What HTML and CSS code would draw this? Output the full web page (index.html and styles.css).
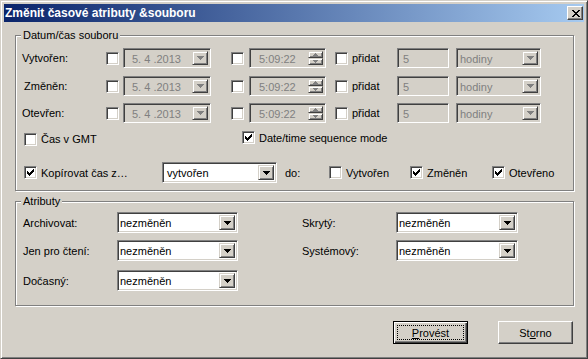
FILE: index.html
```html
<!DOCTYPE html>
<html>
<head>
<meta charset="utf-8">
<link rel="stylesheet" href="styles.css">
</head>
<body>
<div class="window">
  <div class="titlebar">
    <span class="title">Změnit časové atributy &amp;souboru</span>
    <span class="close"><svg width="8" height="7" viewBox="0 0 8 7" shape-rendering="crispEdges"><path d="M0 0h2v1H0zM6 0h2v1H6zM1 1h2v1H1zM5 1h2v1H5zM2 2h4v1H2zM3 3h2v1H3zM2 4h4v1H2zM1 5h2v1H1zM5 5h2v1H5zM0 6h2v1H0zM6 6h2v1H6z"/></svg></span>
  </div>

  <div class="group g1">
    <span class="legend">Datum/čas souboru</span>

    <div class="trow r1">
      <span class="lbl">Vytvořen:</span>
      <span class="cb"></span>
      <span class="field date dis"><span class="val">5. 4 .2013</span><span class="ddbtn"><svg class="arr" width="7" height="4" viewBox="0 0 7 4" shape-rendering="crispEdges"><path d="M0 0h7v1H0zM1 1h5v1H1zM2 2h3v1H2zM3 3h1v1H3z"/></svg></span></span>
      <span class="cb cb2"></span>
      <span class="field time dis"><span class="val">5:09:22</span><span class="spin"><span class="sb"><svg width="5" height="3" viewBox="0 0 5 3" shape-rendering="crispEdges"><path d="M2 0h1v1H2zM1 1h3v1H1zM0 2h5v1H0z"/></svg></span><span class="sb"><svg width="5" height="3" viewBox="0 0 5 3" shape-rendering="crispEdges"><path d="M0 0h5v1H0zM1 1h3v1H1zM2 2h1v1H2z"/></svg></span></span></span>
      <span class="cb cb3"></span><span class="cbtext add">přidat</span>
      <span class="field num dis"><span class="val">5</span></span>
      <span class="field unit dis"><span class="val">hodiny</span><span class="ddbtn"><svg class="arr" width="7" height="4" viewBox="0 0 7 4" shape-rendering="crispEdges"><path d="M0 0h7v1H0zM1 1h5v1H1zM2 2h3v1H2zM3 3h1v1H3z"/></svg></span></span>
    </div>

    <div class="trow r2">
      <span class="lbl ind">Změněn:</span>
      <span class="cb"></span>
      <span class="field date dis"><span class="val">5. 4 .2013</span><span class="ddbtn"><svg class="arr" width="7" height="4" viewBox="0 0 7 4" shape-rendering="crispEdges"><path d="M0 0h7v1H0zM1 1h5v1H1zM2 2h3v1H2zM3 3h1v1H3z"/></svg></span></span>
      <span class="cb cb2"></span>
      <span class="field time dis"><span class="val">5:09:22</span><span class="spin"><span class="sb"><svg width="5" height="3" viewBox="0 0 5 3" shape-rendering="crispEdges"><path d="M2 0h1v1H2zM1 1h3v1H1zM0 2h5v1H0z"/></svg></span><span class="sb"><svg width="5" height="3" viewBox="0 0 5 3" shape-rendering="crispEdges"><path d="M0 0h5v1H0zM1 1h3v1H1zM2 2h1v1H2z"/></svg></span></span></span>
      <span class="cb cb3"></span><span class="cbtext add">přidat</span>
      <span class="field num dis"><span class="val">5</span></span>
      <span class="field unit dis"><span class="val">hodiny</span><span class="ddbtn"><svg class="arr" width="7" height="4" viewBox="0 0 7 4" shape-rendering="crispEdges"><path d="M0 0h7v1H0zM1 1h5v1H1zM2 2h3v1H2zM3 3h1v1H3z"/></svg></span></span>
    </div>

    <div class="trow r3">
      <span class="lbl">Otevřen:</span>
      <span class="cb"></span>
      <span class="field date dis"><span class="val">5. 4 .2013</span><span class="ddbtn"><svg class="arr" width="7" height="4" viewBox="0 0 7 4" shape-rendering="crispEdges"><path d="M0 0h7v1H0zM1 1h5v1H1zM2 2h3v1H2zM3 3h1v1H3z"/></svg></span></span>
      <span class="cb cb2"></span>
      <span class="field time dis"><span class="val">5:09:22</span><span class="spin"><span class="sb"><svg width="5" height="3" viewBox="0 0 5 3" shape-rendering="crispEdges"><path d="M2 0h1v1H2zM1 1h3v1H1zM0 2h5v1H0z"/></svg></span><span class="sb"><svg width="5" height="3" viewBox="0 0 5 3" shape-rendering="crispEdges"><path d="M0 0h5v1H0zM1 1h3v1H1zM2 2h1v1H2z"/></svg></span></span></span>
      <span class="cb cb3"></span><span class="cbtext add">přidat</span>
      <span class="field num dis"><span class="val">5</span></span>
      <span class="field unit dis"><span class="val">hodiny</span><span class="ddbtn"><svg class="arr" width="7" height="4" viewBox="0 0 7 4" shape-rendering="crispEdges"><path d="M0 0h7v1H0zM1 1h5v1H1zM2 2h3v1H2zM3 3h1v1H3z"/></svg></span></span>
    </div>

    <div class="orow r4">
      <span class="opt gmt"><span class="cb"></span><span class="cbtext">Čas v GMT</span></span>
      <span class="opt seq"><span class="cb"><svg width="7" height="7" viewBox="0 0 7 7" shape-rendering="crispEdges"><path d="M0 2h1v3H0zM1 3h1v3H1zM2 4h1v3H2zM3 3h1v3H3zM4 2h1v3H4zM5 1h1v3H5zM6 0h1v3H6z"/></svg></span><span class="cbtext">Date/time sequence mode</span></span>
    </div>

    <div class="orow r5">
      <span class="opt copy"><span class="cb"><svg width="7" height="7" viewBox="0 0 7 7" shape-rendering="crispEdges"><path d="M0 2h1v3H0zM1 3h1v3H1zM2 4h1v3H2zM3 3h1v3H3zM4 2h1v3H4zM5 1h1v3H5zM6 0h1v3H6z"/></svg></span><span class="cbtext">Kopírovat čas z…</span></span>
      <span class="field combo src"><span class="val">vytvořen</span><span class="ddbtn"><svg class="arr" width="7" height="4" viewBox="0 0 7 4" shape-rendering="crispEdges"><path d="M0 0h7v1H0zM1 1h5v1H1zM2 2h3v1H2zM3 3h1v1H3z"/></svg></span></span>
      <span class="do">do:</span>
      <span class="opt t1"><span class="cb"></span><span class="cbtext">Vytvořen</span></span>
      <span class="opt t2"><span class="cb"><svg width="7" height="7" viewBox="0 0 7 7" shape-rendering="crispEdges"><path d="M0 2h1v3H0zM1 3h1v3H1zM2 4h1v3H2zM3 3h1v3H3zM4 2h1v3H4zM5 1h1v3H5zM6 0h1v3H6z"/></svg></span><span class="cbtext">Změněn</span></span>
      <span class="opt t3"><span class="cb"><svg width="7" height="7" viewBox="0 0 7 7" shape-rendering="crispEdges"><path d="M0 2h1v3H0zM1 3h1v3H1zM2 4h1v3H2zM3 3h1v3H3zM4 2h1v3H4zM5 1h1v3H5zM6 0h1v3H6z"/></svg></span><span class="cbtext">Otevřeno</span></span>
    </div>
  </div>

  <div class="group g2">
    <span class="legend">Atributy</span>
    <div class="arow a1">
      <span class="albl">Archivovat:</span>
      <span class="field combo acl"><span class="val">nezměněn</span><span class="ddbtn"><svg class="arr" width="7" height="4" viewBox="0 0 7 4" shape-rendering="crispEdges"><path d="M0 0h7v1H0zM1 1h5v1H1zM2 2h3v1H2zM3 3h1v1H3z"/></svg></span></span>
      <span class="albl right">Skrytý:</span>
      <span class="field combo acr"><span class="val">nezměněn</span><span class="ddbtn"><svg class="arr" width="7" height="4" viewBox="0 0 7 4" shape-rendering="crispEdges"><path d="M0 0h7v1H0zM1 1h5v1H1zM2 2h3v1H2zM3 3h1v1H3z"/></svg></span></span>
    </div>
    <div class="arow a2">
      <span class="albl">Jen pro čtení:</span>
      <span class="field combo acl"><span class="val">nezměněn</span><span class="ddbtn"><svg class="arr" width="7" height="4" viewBox="0 0 7 4" shape-rendering="crispEdges"><path d="M0 0h7v1H0zM1 1h5v1H1zM2 2h3v1H2zM3 3h1v1H3z"/></svg></span></span>
      <span class="albl right">Systémový:</span>
      <span class="field combo acr"><span class="val">nezměněn</span><span class="ddbtn"><svg class="arr" width="7" height="4" viewBox="0 0 7 4" shape-rendering="crispEdges"><path d="M0 0h7v1H0zM1 1h5v1H1zM2 2h3v1H2zM3 3h1v1H3z"/></svg></span></span>
    </div>
    <div class="arow a3">
      <span class="albl">Dočasný:</span>
      <span class="field combo acl"><span class="val">nezměněn</span><span class="ddbtn"><svg class="arr" width="7" height="4" viewBox="0 0 7 4" shape-rendering="crispEdges"><path d="M0 0h7v1H0zM1 1h5v1H1zM2 2h3v1H2zM3 3h1v1H3z"/></svg></span></span>
    </div>
  </div>

  <div class="buttons">
    <span class="btn default"><span class="focus"><u>P</u>rovést</span></span>
    <span class="btn">St<u>o</u>rno</span>
  </div>
</div>
</body>
</html>
```

FILE: styles.css
```css
* { box-sizing: border-box; }

body {
  margin: 0;
  background: #d4d0c8;
  font-family: "Liberation Sans", Arial, sans-serif;
  font-size: 11px;
  color: #000;
}

.window {
  width: 588px;
  height: 359px;
  background: #d4d0c8;
  border: 1px solid;
  border-color: #d4d0c8 #404040 #404040 #d4d0c8;
  box-shadow: inset 1px 1px 0 #fff, inset -1px -1px 0 #808080;
  padding: 3px;
  display: flex;
  flex-direction: column;
}

.titlebar {
  flex: none;
  height: 18px;
  background: linear-gradient(to right, #0a246a, #a6caf0);
  display: flex;
  align-items: center;
  padding: 0 1px 0 1px;
}

.title {
  flex: 1;
  color: #fff;
  font-weight: bold;
  font-size: 12px;
  white-space: nowrap;
}

.close {
  width: 16px;
  height: 14px;
  background: #d4d0c8;
  border: 1px solid;
  border-color: #fff #404040 #404040 #fff;
  box-shadow: inset -1px -1px 0 #808080;
  display: flex;
  align-items: center;
  justify-content: center;
}
.close svg { display: block; fill: #000; margin-left: 1px; }

/* group boxes */
.group {
  position: relative;
  flex: none;
  width: 559px;
  margin-left: 11px;
  border: 1px solid #808080;
  box-shadow: inset 1px 1px 0 #fff, 1px 1px 0 #fff;
}

.legend {
  position: absolute;
  left: 5px;
  top: -8px;
  padding: 0 2px;
  background: #d4d0c8;
  line-height: 14px;
}

.g1 {
  margin-top: 13px;
  height: 156px;
  padding: 12px 0 0 6px;
}

.g2 {
  margin-top: 10px;
  height: 105px;
  padding: 10px 0 0 7px;
}

/* rows of the time section */
.trow {
  display: flex;
  align-items: center;
  height: 20px;
}
.r2 { margin-top: 8px; }
.r3 { margin-top: 7px; }

.lbl { width: 84px; flex: none; }
.lbl.ind { padding-left: 2px; }

.cb {
  flex: none;
  width: 13px;
  height: 13px;
  background: #fff;
  border: 1px solid;
  border-color: #808080 #fff #fff #808080;
  box-shadow: inset 1px 1px 0 #404040, inset -1px -1px 0 #d4d0c8;
  padding: 2px;
}
.cb svg { display: block; fill: #000; }

.cb2 { margin-left: 20px; }
.cb3 { margin-left: 9px; }

.cbtext { margin-left: 4px; white-space: nowrap; }
.cbtext.add { width: 45px; flex: none; }

/* sunken fields and combos */
.field {
  flex: none;
  display: flex;
  height: 20px;
  padding: 2px;
  background: #fff;
  border: 1px solid;
  border-color: #808080 #fff #fff #808080;
  box-shadow: inset 1px 1px 0 #404040, inset -1px -1px 0 #d4d0c8;
}
.field.dis { background: #d4d0c8; color: #808080; }

.val {
  flex: 1;
  min-width: 0;
  line-height: 16px;
  white-space: nowrap;
  overflow: hidden;
}

.ddbtn {
  flex: none;
  width: 16px;
  background: #d4d0c8;
  border: 1px solid;
  border-color: #d4d0c8 #404040 #404040 #d4d0c8;
  box-shadow: inset 1px 1px 0 #fff, inset -1px -1px 0 #808080;
  display: flex;
  align-items: center;
  justify-content: center;
}
.arr { display: block; fill: #000; }
.dis .arr { fill: #808080; }

.date { width: 88px; margin-left: 4px; }
.date .val { padding-left: 6px; }

.time { width: 77px; margin-left: 5px; }
.time .val { padding-left: 7px; }

.spin {
  flex: none;
  width: 15px;
  display: flex;
  flex-direction: column;
}
.sb {
  flex: 1;
  background: #d4d0c8;
  border: 1px solid;
  border-color: #d4d0c8 #404040 #404040 #d4d0c8;
  box-shadow: inset 1px 1px 0 #fff, inset -1px -1px 0 #808080;
  display: flex;
  align-items: center;
  justify-content: center;
}
.sb svg { display: block; fill: #808080; }

.num { width: 52px; }
.num .val { padding-left: 3px; }

.unit { width: 85px; margin-left: 7px; }
.unit .val { padding-left: 1px; }

/* option rows */
.orow {
  display: flex;
  align-items: center;
}
.r4 { margin-top: 8px; height: 16px; }
.r5 { margin-top: 15px; height: 21px; }

.opt {
  flex: none;
  display: flex;
  align-items: center;
}
.gmt { width: 218px; margin-left: 2px; }
.seq .cb { margin-top: -3px; }
.seq .cbtext { margin-top: -3px; }
.copy { width: 138px; margin-left: 2px; }

.combo { height: 21px; }
.combo .val { padding-left: 2px; line-height: 17px; }
.src { width: 115px; }

.do { width: 44px; flex: none; margin-left: 8px; }
.t1 { width: 81px; }
.t2 { width: 82px; }

/* attributes */
.arow {
  display: flex;
  align-items: center;
  height: 21px;
}
.a2 { margin-top: 7px; }
.a3 { margin-top: 9px; }

.albl { width: 94px; flex: none; }
.albl.right { margin-left: 64px; }
.acl { width: 121px; }
.acr { width: 122px; }
.acl .val, .acr .val { padding-left: 0; }

/* buttons */
.buttons {
  flex: none;
  width: 559px;
  margin: 15px 0 0 11px;
  padding-right: 1px;
  display: flex;
  justify-content: flex-end;
  gap: 30px;
}

.btn {
  width: 75px;
  height: 23px;
  background: #d4d0c8;
  border: 1px solid;
  border-color: #fff #404040 #404040 #fff;
  box-shadow: inset -1px -1px 0 #808080;
  display: flex;
  align-items: center;
  justify-content: center;
}
.btn.default {
  border: 1px solid #000;
  box-shadow: inset 1px 1px 0 #fff, inset -1px -1px 0 #404040, inset -2px -2px 0 #808080;
  padding: 3px;
}
.focus {
  flex: 1;
  align-self: stretch;
  border: 1px dotted #000;
  display: flex;
  align-items: center;
  justify-content: center;
}
```
